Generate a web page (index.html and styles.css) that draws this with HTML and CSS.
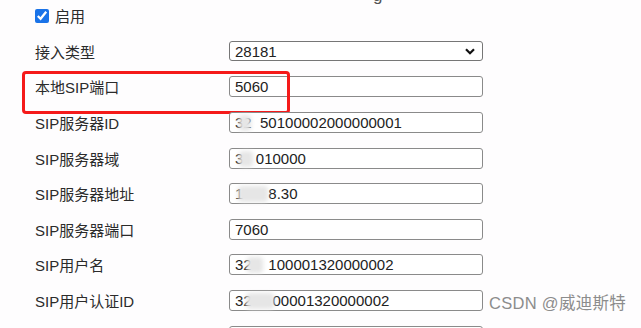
FILE: index.html
```html
<!DOCTYPE html>
<html>
	<head>
		<meta charset="utf-8" />
		<title>SIP配置</title>
		<link rel="stylesheet" href="styles.css">
	</head>
	<body>
		<div class="page-title">g</div>
		<main class="form">
			<div class="row check-row">
				<label class="check">
					<input type="checkbox" checked />
					<span>启用</span>
				</label>
			</div>

			<div class="row">
				<span class="label">接入类型</span>
				<div class="select-wrap">
					<select>
						<option>28181</option>
					</select>
					<svg class="chevron" width="10" height="7" viewBox="0 0 10 7">
						<path d="M1 1.2 L5 5.2 L9 1.2" fill="none" stroke="#111" stroke-width="2.2" />
					</svg>
				</div>
			</div>

			<div class="row highlight">
				<span class="label">本地SIP端口</span>
				<input type="text" value="5060" />
			</div>

			<div class="row">
				<span class="label">SIP服务器ID</span>
				<div class="field">
					<input type="text" value="32  50100002000000001" />
					<span class="blur" style="left: 10px; width: 12px;"></span>
				</div>
			</div>

			<div class="row">
				<span class="label">SIP服务器域</span>
				<div class="field">
					<input type="text" value="3   010000" />
					<span class="blur" style="left: 10px; width: 14px;"></span>
				</div>
			</div>

			<div class="row">
				<span class="label">SIP服务器地址</span>
				<div class="field">
					<input type="text" value="1      8.30" />
					<span class="blur" style="left: 9px; width: 30px;"></span>
				</div>
			</div>

			<div class="row">
				<span class="label">SIP服务器端口</span>
				<input type="text" value="7060" />
			</div>

			<div class="row">
				<span class="label">SIP用户名</span>
				<div class="field">
					<input type="text" value="32    100001320000002" />
					<span class="blur" style="left: 18px; width: 16px;"></span>
				</div>
			</div>

			<div class="row">
				<span class="label">SIP用户认证ID</span>
				<div class="field">
					<input type="text" value="32     00001320000002" />
					<span class="blur" style="left: 17px; width: 28px;"></span>
				</div>
			</div>

			<div class="row">
				<span class="label"></span>
				<input type="text" value="" />
			</div>
		</main>

		<span class="watermark">CSDN @威迪斯特</span>
	</body>
</html>
```

FILE: styles.css
```css
* {
	padding: 0;
	margin: 0;
	box-sizing: border-box;
}

html, body {
	height: 100%;
	overflow: hidden;
}

body {
	position: relative;
	background: #fefdfe;
	font-family: 'Liberation Sans', 'Noto Sans CJK SC', sans-serif;
	font-size: 15px;
	color: #2b2b2b;
}

.page-title {
	position: absolute;
	top: -14px;
	left: 373px;
	font-size: 17px;
	color: #555;
}

.form {
	padding-left: 35px;
	margin-top: -2px;
}

.row {
	display: grid;
	grid-template-columns: 194px 254px;
	align-items: center;
	height: 35.6px;
}

.check {
	display: flex;
	align-items: center;
	gap: 6px;
}

.check input {
	width: 14px;
	height: 14px;
	margin: 0;
	accent-color: #1a73e8;
}

.label {
	white-space: nowrap;
}

input[type="text"], select {
	display: block;
	width: 254px;
	height: 21px;
	border: 1px solid #8a8a8a;
	border-radius: 3px;
	padding: 0 5px;
	font-family: inherit;
	font-size: 15px;
	color: #222;
	background: #fff;
	outline: none;
}

select {
	appearance: none;
	height: 20px;
	border-color: #767676;
}

.select-wrap, .field {
	position: relative;
	width: 254px;
}

.chevron {
	position: absolute;
	right: 8px;
	top: 7px;
}

.blur {
	position: absolute;
	top: 3px;
	height: 16px;
	background: #e6e6e6;
	border-radius: 4px;
	filter: blur(2px);
}

.highlight {
	position: relative;
}

.highlight::after {
	content: '';
	position: absolute;
	left: -13px;
	top: 1.8px;
	width: 262px;
	height: 37px;
	border: 3px solid #f51a1a;
	border-radius: 4px;
}

.watermark {
	position: absolute;
	left: 489px;
	top: 290px;
	font-size: 16.5px;
	color: #8c8c8c;
	letter-spacing: 0.3px;
}
```
